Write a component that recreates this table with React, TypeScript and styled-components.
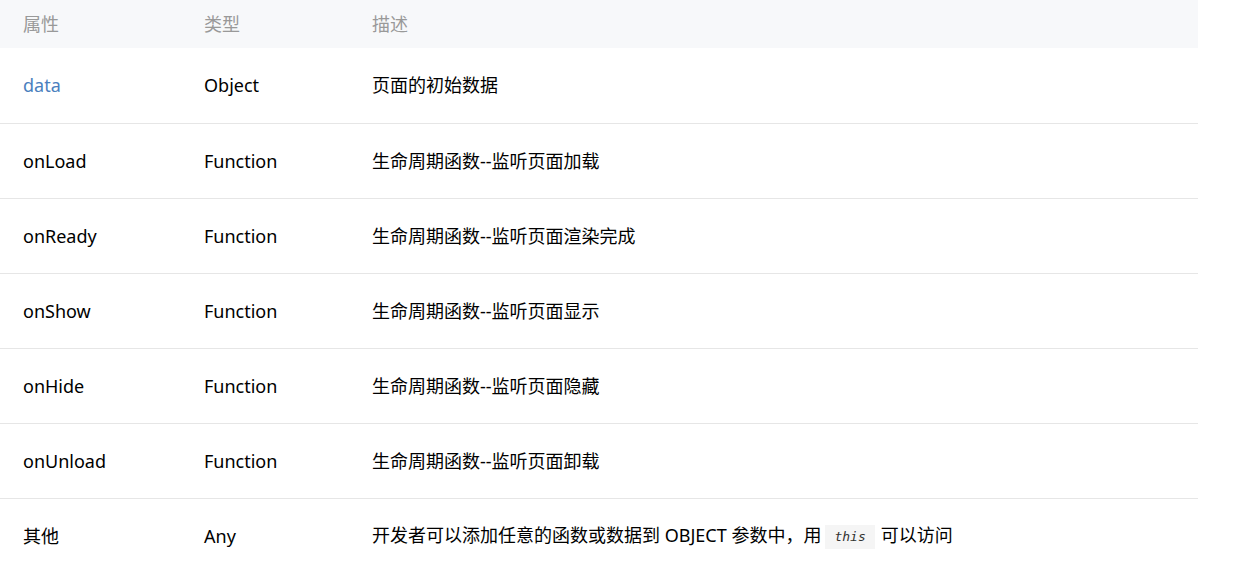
import styled, { createGlobalStyle } from 'styled-components';

const GlobalStyle = createGlobalStyle`
  html, body {
    margin: 0;
    padding: 0;
    background: #ffffff;
  }
  body {
    font-family: "Noto Sans", "Noto Sans CJK SC", sans-serif;
    color: #000000;
  }
`

const Table = styled.table`
  width: 1198px;
  border-collapse: collapse;
  table-layout: fixed;
  font-size: 18px;
`

const HeadRow = styled.tr`
  background: #f7f8fa;
  height: 48px;
`

const HeadCell = styled.th<{ $w?: number }>`
  width: ${p => (p.$w ? `${p.$w}px` : 'auto')};
  padding: 0;
  text-align: left;
  font-weight: 400;
  color: #999999;
  line-height: 24px;
  vertical-align: middle;
  &:first-child {
    padding-left: 23px;
  }
`

const Row = styled.tr`
  height: 75px;
  & + & {
    border-top: 1px solid #e6e6e6;
  }
`

const Cell = styled.td`
  padding: 0;
  line-height: 24px;
  vertical-align: middle;
  &:first-child {
    padding-left: 23px;
  }
`

const Link = styled.a`
  color: #4a7fbe;
  text-decoration: none;
`

const Code = styled.code`
  display: inline-block;
  margin: 0 6px 0 4px;
  padding: 0 9px;
  background: #f5f5f5;
  font-family: "DejaVu Sans Mono", monospace;
  font-style: italic;
  font-size: 13px;
  line-height: 24px;
  color: #333333;
  vertical-align: 1px;
`

const rows = [
  { name: 'onLoad', type: 'Function', desc: '生命周期函数--监听页面加载' },
  { name: 'onReady', type: 'Function', desc: '生命周期函数--监听页面渲染完成' },
  { name: 'onShow', type: 'Function', desc: '生命周期函数--监听页面显示' },
  { name: 'onHide', type: 'Function', desc: '生命周期函数--监听页面隐藏' },
  { name: 'onUnload', type: 'Function', desc: '生命周期函数--监听页面卸载' },
]

const App = () => {
  return (
    <>
      <GlobalStyle />
      <Table>
        <thead>
          <HeadRow>
            <HeadCell $w={181}>属性</HeadCell>
            <HeadCell $w={168}>类型</HeadCell>
            <HeadCell>描述</HeadCell>
          </HeadRow>
        </thead>
        <tbody>
          <Row>
            <Cell><Link href="#">data</Link></Cell>
            <Cell>Object</Cell>
            <Cell>页面的初始数据</Cell>
          </Row>
          {rows.map(r => (
            <Row key={r.name}>
              <Cell>{r.name}</Cell>
              <Cell>{r.type}</Cell>
              <Cell>{r.desc}</Cell>
            </Row>
          ))}
          <Row>
            <Cell>其他</Cell>
            <Cell>Any</Cell>
            <Cell>
              开发者可以添加任意的函数或数据到 OBJECT 参数中，用<Code>this</Code>可以访问
            </Cell>
          </Row>
        </tbody>
      </Table>
    </>
  )
}

export default App;
